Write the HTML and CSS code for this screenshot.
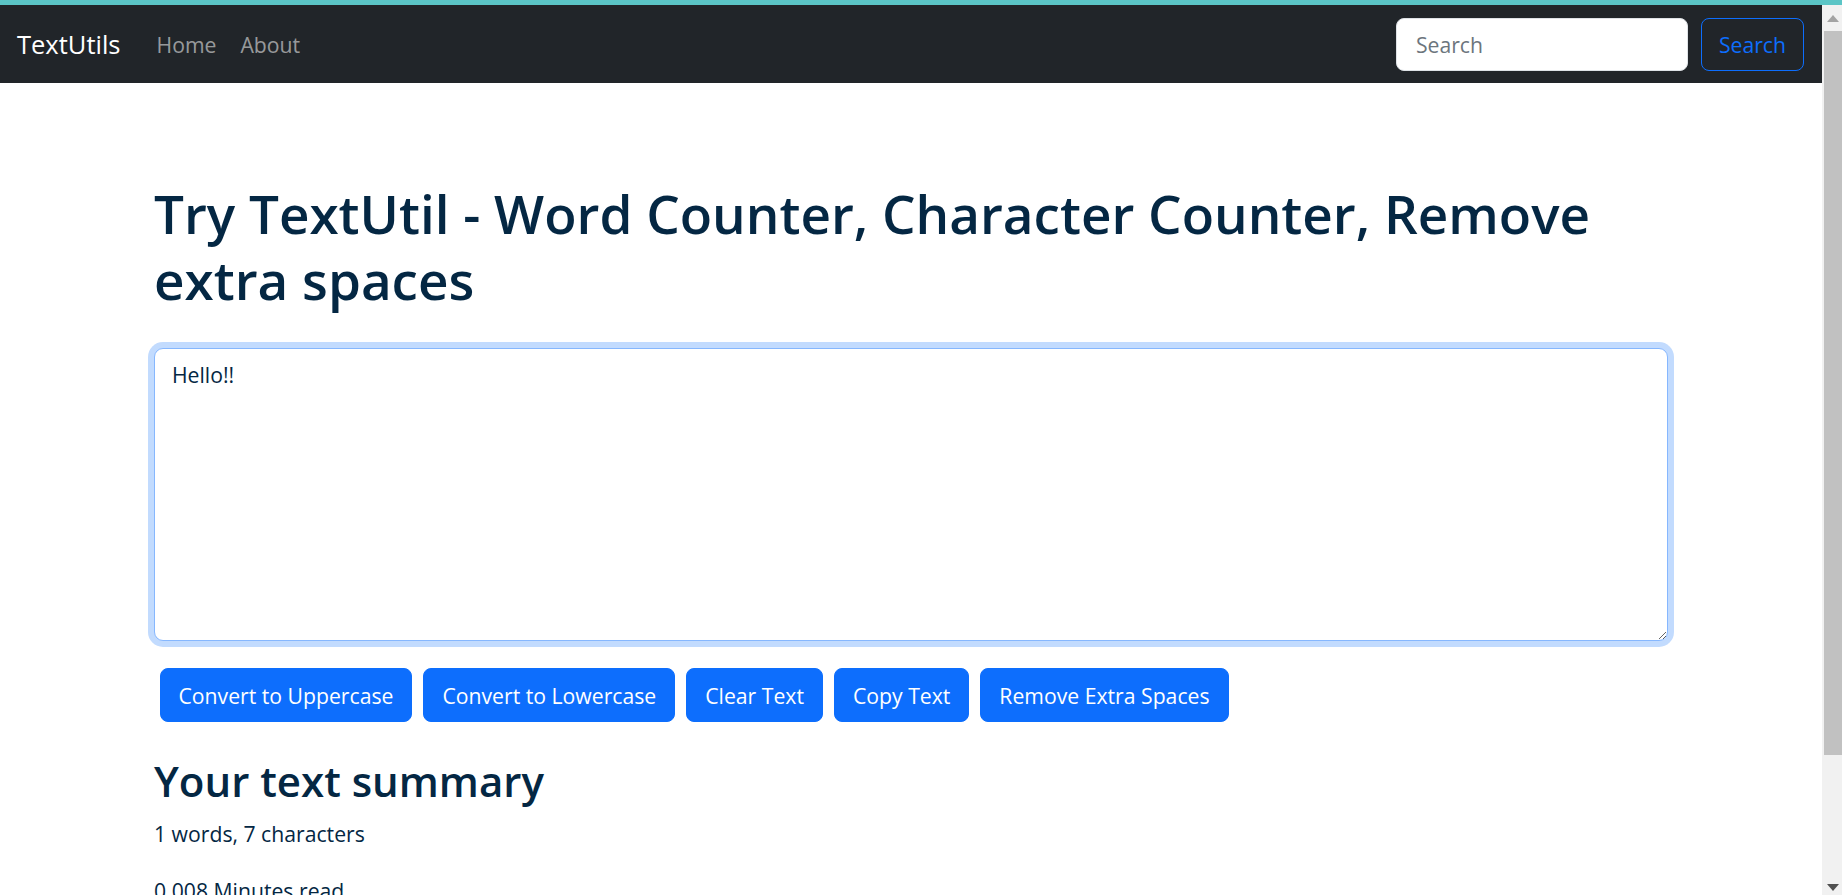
FILE: index.html
```html
<!DOCTYPE html>
<html lang="en">
<head>
    <meta charset="UTF-8">
    <meta name="viewport" content="width=device-width, initial-scale=1.0">
    <title>TextUtils - Home</title>
    <link rel="stylesheet" href="styles.css">
</head>
<body>
    <div class="window">
        <div class="page">
            <nav class="navbar">
                <a class="navbar__brand" href="#">TextUtils</a>
                <ul class="navbar__links">
                    <li><a class="nav-link" href="#">Home</a></li>
                    <li><a class="nav-link" href="#">About</a></li>
                </ul>
                <form class="search-form" role="search">
                    <input class="search-form__input" type="search" placeholder="Search" aria-label="Search">
                    <button class="search-form__btn" type="submit">Search</button>
                </form>
            </nav>

            <main class="container">
                <h1 class="title">Try TextUtil - Word Counter, Character Counter, Remove extra spaces</h1>
                <div class="text-area-wrap">
                    <textarea class="text-box" id="myBox" rows="8">Hello!!</textarea>
                </div>
                <div class="actions">
                    <button class="btn">Convert to Uppercase</button>
                    <button class="btn">Convert to Lowercase</button>
                    <button class="btn">Clear Text</button>
                    <button class="btn">Copy Text</button>
                    <button class="btn">Remove Extra Spaces</button>
                </div>

                <section class="summary">
                    <h2>Your text summary</h2>
                    <p>1 words, 7 characters</p>
                    <p>0.008 Minutes read</p>
                    <h2>Preview</h2>
                    <p>Hello!!</p>
                </section>
            </main>
        </div>

        <!-- window scrollbar -->
        <div class="scrollbar">
            <span class="scrollbar__arrow scrollbar__arrow--up"></span>
            <span class="scrollbar__thumb"></span>
            <span class="scrollbar__arrow scrollbar__arrow--down"></span>
        </div>
    </div>
</body>
</html>
```

FILE: styles.css
```css
body {
    margin: 0;
    border-top: 5px solid #5bc5c6;
    font-family: "Open Sans", "Noto Sans", sans-serif;
    font-size: 21.2px;
    line-height: 35px;
    color: #042743;
    background-color: #fff;
}

.window {
    display: flex;
    align-items: flex-start;
}

.page {
    flex: 1;
    min-width: 0;
}

/* navbar */
.navbar {
    display: flex;
    align-items: center;
    height: 78px;
    padding: 0 18px 0 17px;
    background-color: #212529;
}

.navbar__brand {
    font-size: 25.5px;
    color: #fff;
    text-decoration: none;
    margin-right: 24px;
}

.navbar__links {
    display: flex;
    list-style: none;
    margin: 0;
    padding: 0;
}

.nav-link {
    display: block;
    padding: 0 12px;
    color: rgba(255, 255, 255, 0.55);
    text-decoration: none;
}

.search-form {
    display: flex;
    gap: 13px;
    margin-left: auto;
}

.search-form__input {
    width: 292px;
    height: 53px;
    box-sizing: border-box;
    padding: 0 19px;
    border: 1px solid #dee2e6;
    border-radius: 8px;
    font-family: inherit;
    font-size: 21.2px;
    color: #212529;
    background-color: #fff;
}

.search-form__input::placeholder {
    color: #6c757d;
}

.search-form__btn {
    height: 53px;
    padding: 0 17px;
    border: 1.5px solid #0d6efd;
    border-radius: 8px;
    font-family: inherit;
    font-size: 21.2px;
    color: #0d6efd;
    background-color: transparent;
}

/* main content */
.container {
    width: 1514px;
    margin: 0 auto;
    padding-top: 98px;
}

.title {
    margin: 0 0 35px;
    font-size: 53px;
    font-weight: 600;
    line-height: 66px;
}

.text-box {
    display: block;
    width: 100%;
    height: 293px;
    box-sizing: border-box;
    padding: 8px 17px;
    border: 1px solid #86b7fe;
    border-radius: 9px;
    box-shadow: 0 0 0 6px rgba(13, 110, 253, 0.25);
    outline: none;
    font-family: inherit;
    font-size: 21.2px;
    line-height: 35px;
    color: #042743;
    background-color: #fff;
}

.actions {
    display: flex;
    flex-wrap: wrap;
    margin-top: 27px;
}

.btn {
    height: 54px;
    margin: 0 5.5px;
    padding: 0 18px;
    border: 1px solid #0d6efd;
    border-radius: 8px;
    font-family: inherit;
    font-size: 21.2px;
    color: #fff;
    background-color: #0d6efd;
    cursor: pointer;
}

.summary h2 {
    margin: 31px 0 8px;
    font-size: 42px;
    font-weight: 600;
    line-height: 55px;
}

.summary p {
    margin: 0 0 22px;
}

/* scrollbar drawn at the right edge, like the browser one */
.scrollbar {
    position: sticky;
    top: 0;
    flex: 0 0 18px;
    display: flex;
    flex-direction: column;
    align-items: center;
    height: calc(100vh - 5px);
    padding-left: 2px;
    background-color: #f1f1f1;
}

.scrollbar__arrow {
    width: 0;
    height: 0;
    border-left: 6px solid transparent;
    border-right: 6px solid transparent;
}

.scrollbar__arrow--up {
    margin-top: 10px;
    border-bottom: 7px solid #a3a3a3;
}

.scrollbar__thumb {
    align-self: stretch;
    height: 724px;
    margin-top: 9px;
    background-color: #c1c1c1;
}

.scrollbar__arrow--down {
    margin-top: auto;
    margin-bottom: 4px;
    border-top: 7px solid #505050;
}
```
